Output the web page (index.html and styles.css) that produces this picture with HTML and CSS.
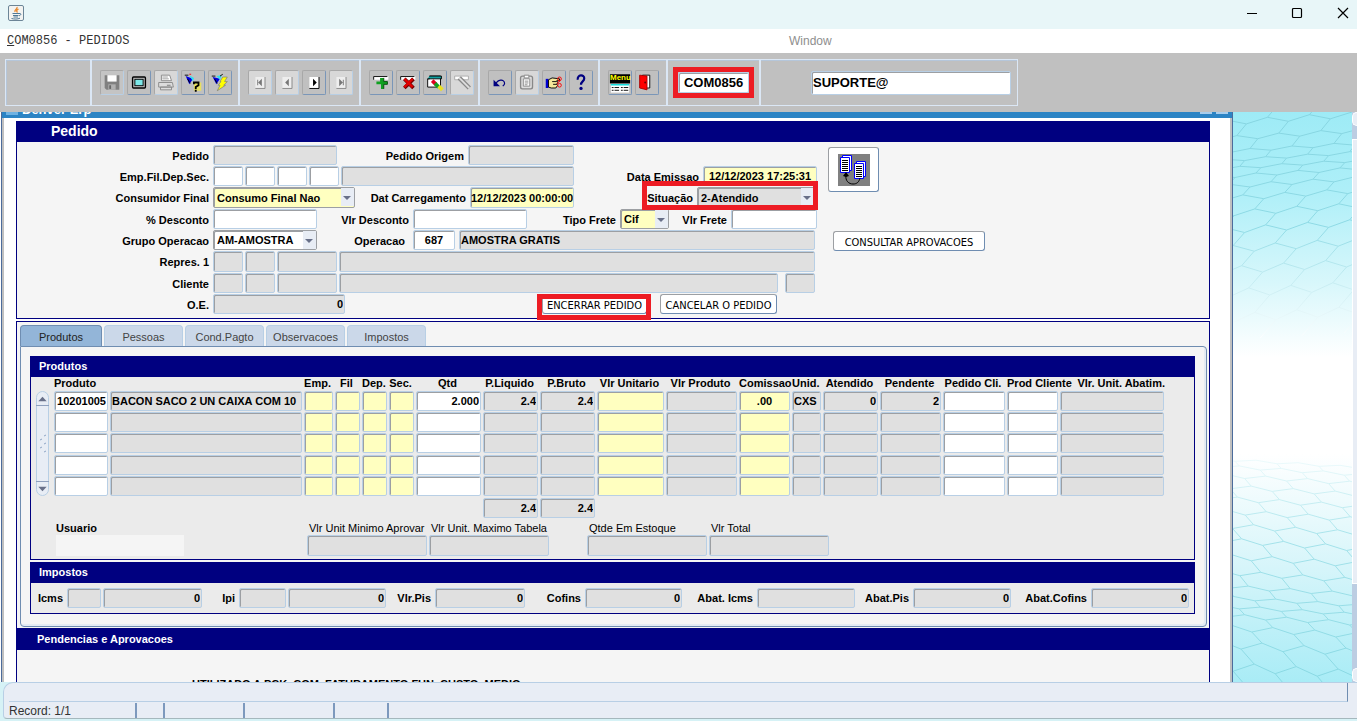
FILE: index.html
```html
<!DOCTYPE html>
<html lang="pt-BR">
<head>
  <meta charset="UTF-8">
  <meta name="viewport" content="width=device-width, initial-scale=1.0">
  <title>COM0856 - PEDIDOS</title>
  <link rel="stylesheet" href="styles.css">
</head>
<body>
  <header class="titlebar">
    <svg class="java" viewBox="0 0 16 16" width="16" height="16">
      <rect x=".5" y=".5" width="15" height="15" rx="1.5" fill="#f3f3f1" stroke="#6c8597"/>
      <path d="M9 2c1 2-3 2.500-2 5M10.500 4c-2 1-2.500 2-1 3.500" fill="none" stroke="#e8872c" stroke-width="1.300"/>
      <path d="M4.500 8.500h6.500M5 10.500h5.500M5.500 12h4.500M3.500 13.500c3 .8 6 .8 8.500-.3M11 8.500c2.500-.4 2.500 1.600 0 2.300" fill="none" stroke="#4f7896"/>
    </svg>
    <div class="win_btns">
      <button aria-label="Minimizar"><svg viewBox="0 0 12 12"><path d="M2 6.500h10" stroke="#000"/></svg></button>
      <button aria-label="Maximizar"><svg viewBox="0 0 12 12"><rect x="1.500" y="1.500" width="9" height="9" rx="1" fill="none" stroke="#000" stroke-width="1.200"/></svg></button>
      <button aria-label="Fechar"><svg viewBox="0 0 12 12"><path d="M1 1l10 10M11 1L1 11" stroke="#000" stroke-width="1.200"/></svg></button>
    </div>
  </header>

  <nav class="menubar">
    <span class="menu_title"><u>C</u>OM0856 - PEDIDOS</span>
    <span class="menu_window">Window</span>
  </nav>

  <div class="toolbar">
    <div class="tools">
      <div class="cell c_blank"></div>
      <div class="cell c_file">
        <button class="tool off" aria-label="Salvar"><svg viewBox="0 0 24 24"><path d="M4 4h16v16h-14l-2-2z" fill="#808080"/><path d="M7 4h10v7H7z" fill="#fff"/><path d="M8 14h8v6H8z" fill="#b0b0b0"/><path d="M9 15h2v4H9z" fill="#666"/></svg></button>
        <button class="tool" aria-label="Tela"><svg viewBox="0 0 24 24"><rect x="5" y="6" width="14" height="12" rx="1" fill="#c0c0c0" stroke="#000" stroke-width="1.500"/><rect x="7.500" y="8.500" width="9" height="7" fill="#7de8e8" stroke="#000"/></svg></button>
        <button class="tool off" aria-label="Imprimir"><svg viewBox="0 0 24 24"><path d="M7 4h9l2 6H7z" fill="#fff" stroke="#888"/><path d="M8 6h6M8 8h7" stroke="#999"/><path d="M4 12h15l1 5H4zM6 17h12v3H6z" fill="#ddd" stroke="#888"/><path d="M13 15h4" stroke="#777"/></svg></button>
        <button class="tool" aria-label="Consultar"><svg viewBox="0 0 24 24"><path d="M4 5l8 3-4 6z" fill="#0000e0"/><path d="M8 4l5 3-1 4z" fill="#30e0f0"/><path d="M3 4h4M6 8l3 5" stroke="#000"/><path d="M8 3h2" stroke="red"/><path d="M13 12h8v9h-8z" fill="#e8e060"/><path d="M13 14v-2h5v3l-3 2v2M15 20v2" fill="none" stroke="#000" stroke-width="2"/></svg></button>
        <button class="tool" aria-label="Executar consulta"><svg viewBox="0 0 24 24"><path d="M4 6l8 2-4 6z" fill="#0000e0"/><path d="M8 5l6-1-2 5z" fill="#30e0f0"/><path d="M3 5h4M6 8l3 5M12 5l3-2" stroke="#000"/><path d="M15 6h5l-3 5h3l-4 4h2l-9 6 3-6h-2l3-4h-1z" fill="#ff0" stroke="#777" stroke-width=".700"/></svg></button>
      </div>
      <div class="cell c_nav">
        <button class="tool off" aria-label="Primeiro"><svg viewBox="0 0 24 24"><path d="M7 6h10v12H7z" fill="#eee"/><path d="M7 18.500h10.500V6" fill="none" stroke="#888"/><path d="M9 9h1v6H9zM14 8v8l-4-4z" fill="#777"/></svg></button>
        <button class="tool off" aria-label="Anterior"><svg viewBox="0 0 24 24"><path d="M7 6h10v12H7z" fill="#eee"/><path d="M7 18.500h10.500V6" fill="none" stroke="#888"/><path d="M14 8v8l-4-4z" fill="#777"/></svg></button>
        <button class="tool" aria-label="Proximo"><svg viewBox="0 0 24 24"><path d="M7 6h10v12H7z" fill="#fff"/><path d="M7 18.500h10.500V6" fill="none" stroke="#000"/><path d="M11 8v8l4-4z" fill="#000"/></svg></button>
        <button class="tool off" aria-label="Ultimo"><svg viewBox="0 0 24 24"><path d="M7 6h10v12H7z" fill="#eee"/><path d="M7 18.500h10.500V6" fill="none" stroke="#888"/><path d="M10 8v8l4-4zM14 9h1v6h-1z" fill="#777"/></svg></button>
      </div>
      <div class="cell c_edit">
        <button class="tool" aria-label="Inserir"><svg viewBox="0 0 24 24"><path d="M4 5h16v4H4z" fill="#fff"/><path d="M4 9V5.500h15" fill="none" stroke="#000"/><path d="M11 7h4v4h4v3h-4v5h-3v-5H7v-3h4z" fill="#10a020"/><path d="M15 7v4h4v3h-4v5" fill="none" stroke="#044b0a"/></svg></button>
        <button class="tool" aria-label="Excluir"><svg viewBox="0 0 24 24"><path d="M4 5h16v4H4z" fill="#fff"/><path d="M4 9V5.500h15" fill="none" stroke="#000"/><path d="M8 8l10 10M18 8L8 18" stroke="#700" stroke-width="4"/><path d="M8 8l9 9M17 8l-9 9" stroke="#e00000" stroke-width="2.500"/></svg></button>
        <button class="tool" aria-label="Limpar"><svg viewBox="0 0 24 24"><path d="M6 5h12v12H4V8h2z" fill="#fff" stroke="#000"/><path d="M6 5h13v3H4" fill="#10a0a0" stroke="#000"/><path d="M9 10l4 4" stroke="#e00020" stroke-width="4"/><path d="M12 13l4 4" stroke="#10a020" stroke-width="4"/><path d="M16 16l4 4" stroke="#e8e020" stroke-width="4"/></svg></button>
        <button class="tool off" aria-label="Apagar"><svg viewBox="0 0 24 24"><path d="M4 5h15v4H4z" fill="#fff" stroke="#aaa"/><path d="M9 7l11 11" stroke="#888" stroke-width="5"/><path d="M9 7l11 11" stroke="#ddd" stroke-width="2"/></svg></button>
      </div>
      <div class="cell c_misc">
        <button class="tool" aria-label="Desfazer"><svg viewBox="0 0 24 24"><path d="M7 15c2-7 10-7 10-2 0 1-1 2-2 3" fill="none" stroke="#000080" stroke-width="1.300"/><path d="M5 9v7h7z" fill="#000080"/></svg></button>
        <button class="tool off" aria-label="Colar"><svg viewBox="0 0 24 24"><rect x="5" y="5" width="13" height="14" rx="2" fill="#ddd" stroke="#888" stroke-width="1.500"/><path d="M8 8h7v8H8zM9 4h5v3H9z" fill="#fff" stroke="#888"/><path d="M9.500 10.500h4M9.500 12.500h4M9.500 14.500h3" stroke="#888"/></svg></button>
        <button class="tool" aria-label="Selecionar"><svg viewBox="0 0 24 24"><path d="M3 8h3v10H3z" fill="#0000d0"/><path d="M6 9l4-2 8 1v2h-3l1 2-1 2 1 1-2 3H9l-3-1z" fill="#f4e89a" stroke="#000"/><path d="M10 11h5M11 14h4" stroke="#000"/><circle cx="18" cy="8" r="2" fill="none" stroke="red"/><circle cx="18" cy="15" r="2" fill="none" stroke="red"/><path d="M15 13l4-3" stroke="red"/></svg></button>
        <button class="tool" aria-label="Ajuda"><svg viewBox="0 0 24 24"><path d="M8.500 9c-1-6 7.500-6 7-1.500 0 3.500-3.500 3-3.500 7" fill="none" stroke="#000080" stroke-width="2.400"/><circle cx="12" cy="18.500" r="1.800" fill="#000080"/></svg></button>
      </div>
      <div class="cell c_exit">
        <button class="tool menu_btn" aria-label="Menu"><svg viewBox="0 0 24 24"><path d="M1 3h22v10H1z" fill="#000"/><path d="M2 14h20v9H2z" fill="#fff"/><path d="M2 14.500h20" stroke="#0dd" stroke-width="1.500"/><path d="M3 17.500h8M13 17.500h8M3 20.500h8M13 20.500h8" stroke="#000" stroke-dasharray="2 1 5 3"/></svg><b>Menu</b></button>
        <button class="tool" aria-label="Sair"><svg viewBox="0 0 24 24"><path d="M7 4h8v14H7z" fill="#fff" stroke="#000"/><path d="M4 4l8 1v15l-8-2z" fill="#f00" stroke="#a00"/><circle cx="10" cy="12" r="1" fill="#600"/></svg></button>
      </div>
      <div class="cell c_code"><span class="mark"><input class="field code" aria-label="Programa" value="COM0856"></span></div>
      <div class="cell c_user"><input class="field user" aria-label="Usuario" value="SUPORTE@"></div>
    </div>
  </div>

  <div class="desktop">
    <main class="window">
      <div class="win_title"><i class="win_icon"></i><span>Denver Erp</span><i class="win_min"></i><i class="win_max"></i></div>
      <div class="win_body">

        <section class="panel pedido">
          <h1 class="bar bar_big">Pedido</h1>
          <div class="pedido_body">
            <div class="form">
              <div class="row r_pedido">
                <label for="pedido">Pedido</label><input class="field gray" id="pedido">
                <label for="origem">Pedido Origem</label><input class="field gray" id="origem">
              </div>
              <div class="row r_emp">
                <label for="emp">Emp.Fil.Dep.Sec.</label>
                <div class="group"><input class="field w30" id="emp"><input class="field w30" aria-label="Fil"><input class="field w30" aria-label="Dep"><input class="field w30" aria-label="Sec"><input class="field gray grow" aria-label="Nome"></div>
                <label for="emissao">Data Emissao</label><input class="field yellow center" id="emissao" value="12/12/2023 17:25:31">
              </div>
              <div class="row r_final">
                <label for="final">Consumidor Final</label><span class="select"><select class="field yellow" id="final"><option>Consumo Final Nao</option></select></span>
                <label for="carreg">Dat Carregamento</label><input class="field yellow tight" id="carreg" value="12/12/2023 00:00:00">
                <div class="mark mark_sit"><label for="situacao">Situação</label><span class="select"><select class="field gray" id="situacao"><option>2-Atendido</option></select></span></div>
              </div>
              <div class="row r_desc">
                <label for="pdesc">% Desconto</label><input class="field" id="pdesc">
                <label for="vdesc">Vlr Desconto</label><input class="field" id="vdesc">
                <label for="tfrete">Tipo Frete</label><span class="select"><select class="field yellow" id="tfrete"><option>Cif</option></select></span>
                <label for="vfrete">Vlr Frete</label><input class="field" id="vfrete">
              </div>
              <div class="row r_oper">
                <label for="grupo">Grupo Operacao</label><span class="select"><select class="field" id="grupo"><option>AM-AMOSTRA</option></select></span>
                <label class="l_oper" for="oper">Operacao</label><input class="field center" id="oper" value="687">
                <input class="field gray" aria-label="Descricao da operacao" value="AMOSTRA GRATIS">
              </div>
              <div class="row r_wide">
                <label for="repres">Repres. 1</label>
                <div class="group"><input class="field gray w30" id="repres"><input class="field gray w30" aria-label="Repres. 2"><input class="field gray w60" aria-label="Repres. 3"><input class="field gray grow" aria-label="Nome repres."></div>
              </div>
              <div class="row r_wide">
                <label for="cliente">Cliente</label>
                <div class="group"><input class="field gray w30" id="cliente"><input class="field gray w30" aria-label="Cliente 2"><input class="field gray w60" aria-label="Cliente 3"><input class="field gray grow" aria-label="Nome cliente"><input class="field gray w30 uf" aria-label="UF"></div>
              </div>
              <div class="row r_oe">
                <label for="oe">O.E.</label><input class="field gray right" id="oe" value="0">
                <div class="buttons"><span class="mark mark_btn"><button class="btn">ENCERRAR PEDIDO</button></span><button class="btn cancel">CANCELAR O PEDIDO</button></div>
              </div>
            </div>
            <div class="actions">
              <button class="btn docs" aria-label="Copiar pedido">
                <svg viewBox="0 0 32 32" width="32" height="32">
                  <rect width="32" height="32" fill="#808080"/>
                  <g fill="#fff" stroke="#00f"><path d="M4.500 1.500h9v15h-9z"/><path d="M2.500 3.500h9v15h-9z"/><path d="M18.500 7.500h9v15h-9z"/><path d="M16.500 9.500h9v15h-9z"/></g>
                  <path d="M4 6.500h6M4 8.500h6M4 10.500h6M4 12.500h6M4 14.500h6M4 16.500h6M18 12.500h6M18 14.500h6M18 16.500h6M18 18.500h6M18 20.500h6M18 22.500h6" stroke="#000"/>
                  <path d="M8 21c-1 6 3 9 7 9s6-2 7-6" fill="none" stroke="#000"/><path d="M8 18l3 4-3 1-3-1z"/>
                </svg>
              </button>
              <button class="btn">CONSULTAR APROVACOES</button>
            </div>
          </div>
        </section>

        <section class="panel tabs_panel">
          <div class="tabs" role="tablist">
            <button class="tab on" role="tab">Produtos</button>
            <button class="tab" role="tab">Pessoas</button>
            <button class="tab" role="tab">Cond.Pagto</button>
            <button class="tab" role="tab">Observacoes</button>
            <button class="tab" role="tab">Impostos</button>
          </div>
          <div class="tab_body">
            <section class="panel box">
              <h2 class="bar">Produtos</h2>
              <div class="items">
                <div class="scroller">
                  <svg viewBox="0 0 13 14" width="13" height="14"><path d="M2 10h9L6.500 5z" fill="#687089"/></svg>
                  <svg viewBox="0 0 13 20" width="13" height="20"><path d="M8 2l2-1M4 6l2-1M8 10l2-1M4 14l2-1M8 18l2-1" stroke="#8fa6c6"/></svg>
                  <svg viewBox="0 0 13 14" width="13" height="14"><path d="M2 5h9L6.500 10z" fill="#687089"/></svg>
                </div>
                <table class="grid">
                  <colgroup><col class="k56"><col class="k194"><col class="k31"><col class="k27"><col class="k27"><col class="k27"><col class="k67"><col class="k57"><col class="k57"><col class="k69"><col class="k73"><col class="k53"><col class="k31"><col class="k57"><col class="k63"><col class="k64"><col class="k53"><col class="k106"></colgroup>
                  <thead>
                    <tr><th class="left" colspan="2">Produto</th><th>Emp.</th><th>Fil</th><th>Dep.</th><th>Sec.</th><th>Qtd</th><th>P.Liquido</th><th>P.Bruto</th><th>Vlr Unitario</th><th>Vlr Produto</th><th>Comissao</th><th>Unid.</th><th>Atendido</th><th>Pendente</th><th>Pedido Cli.</th><th class="left">Prod Cliente</th><th class="right">Vlr. Unit. Abatim.</th></tr>
                  </thead>
                  <tbody id="linhas"></tbody>
                  <tfoot>
                    <tr><td colspan="7"></td><td><input class="field gray right" aria-label="Total P.Liquido" value="2.4"></td><td><input class="field gray right" aria-label="Total P.Bruto" value="2.4"></td><td colspan="9"></td></tr>
                  </tfoot>
                </table>
              </div>
              <div class="totals">
                <div class="total usuario"><label for="usuario">Usuario</label><input id="usuario"></div>
                <div class="total"><label for="minimo">Vlr Unit Minimo Aprovar</label><input class="field gray" id="minimo"></div>
                <div class="total"><label for="maximo">Vlr Unit. Maximo Tabela</label><input class="field gray" id="maximo"></div>
                <div class="total estoque"><label for="estoque">Qtde Em Estoque</label><input class="field gray" id="estoque"></div>
                <div class="total"><label for="vtotal">Vlr Total</label><input class="field gray" id="vtotal"></div>
              </div>
            </section>

            <section class="panel box">
              <h2 class="bar">Impostos</h2>
              <div class="taxes">
                <label for="icms">Icms</label><div class="group"><input class="field gray w34" id="icms"><input class="field gray right grow" aria-label="Valor Icms" value="0"></div>
                <label for="ipi">Ipi</label><div class="group"><input class="field gray w47" id="ipi"><input class="field gray right grow" aria-label="Valor Ipi" value="0"></div>
                <label for="pis">Vlr.Pis</label><input class="field gray right" id="pis" value="0">
                <label for="cofins">Cofins</label><input class="field gray right" id="cofins" value="0">
                <label for="aicms">Abat. Icms</label><input class="field gray right" id="aicms">
                <label for="apis">Abat.Pis</label><input class="field gray right" id="apis" value="0">
                <label for="acofins">Abat.Cofins</label><input class="field gray right" id="acofins" value="0">
              </div>
            </section>
          </div>
          <h2 class="bar bar_pend">Pendencias e Aprovacoes</h2>
          <p class="pend_text">UTILIZADO A PCK_COM_FATURAMENTO.FUN_CUSTO_MEDIO</p>
        </section>
      </div>
    </main>

    <svg class="wallpaper" viewBox="0 0 119 570" preserveAspectRatio="xMinYMin slice">
      <defs>
        <linearGradient id="sky" x1="0" y1="0" x2="0" y2="1">
          <stop offset="0" stop-color="#9eebf6"/><stop offset=".14" stop-color="#aeeff8"/><stop offset=".3" stop-color="#d8f7fb"/><stop offset=".43" stop-color="#fff"/>
          <stop offset=".6" stop-color="#fff"/><stop offset=".8" stop-color="#d6f5fa"/><stop offset="1" stop-color="#a9ecf6"/>
        </linearGradient>
        <linearGradient id="line" gradientUnits="userSpaceOnUse" x1="0" y1="0" x2="0" y2="570">
          <stop offset="0" stop-color="#86d5e1"/><stop offset=".2" stop-color="#8edae5"/><stop offset=".4" stop-color="#fff"/>
          <stop offset=".6" stop-color="#f2fcfd"/><stop offset=".75" stop-color="#a4e2ea"/><stop offset="1" stop-color="#88d8e3"/>
        </linearGradient>
      </defs>
      <rect width="119" height="570" fill="url(#sky)"/>
      <path id="hex_cima" fill="none" stroke="url(#line)"/>
      <path id="hex_baixo" fill="none" stroke="url(#line)"/>
    </svg>
    <div class="side_scroll"><i></i><b></b><i></i></div>
  </div>

  <footer class="status">
    <div class="status_top"></div>
    <div class="status_line"><span class="s136">Record: 1/1</span><span class="s28"></span><span class="s80"></span><span class="s90"></span><span class="s54"></span></div>
  </footer>

  <script src="script.js"></script>
</body>
</html>
```

FILE: styles.css
```css
* {margin: 0;padding: 0;box-sizing: border-box;}
body {display: flex;flex-direction: column;height: 100vh;overflow: hidden;background-color: #d6f2f6;font: bold 11px/14px "Liberation Sans", Arial, sans-serif;color: #000;}
input, select, button {font: inherit;color: inherit;min-width: 0;border-radius: 0;}
label {white-space: nowrap;}

/* title + menu */
.titlebar {display: flex;justify-content: space-between;align-items: flex-start;height: 29px;padding: 5px 8px 0;background-color: #e8f6f8;flex: none;}
.win_btns {display: flex;gap: 34px;padding-top: 2px;}
.win_btns button {width: 12px;height: 12px;border: 0;background: none;}
.win_btns svg {display: block;}
.menubar {display: flex;align-items: center;height: 24px;padding-left: 7px;background-color: #fff;flex: none;}
.menu_title {flex: 0 0 782px;font: 12px/16px "Liberation Mono", "Courier New", monospace;color: #333;}
.menu_window {font-size: 12px;font-weight: normal;color: #8e8e8e;}

/* toolbar */
.toolbar {padding: 6px 5px;background-color: #c0c0c0;flex: none;}
.tools {display: flex;width: fit-content;height: 47px;border: 1px solid #dbe7f5;box-shadow: inset 1px 1px 0 #b5c6da;}
.cell {display: flex;align-items: center;gap: 3px;padding-left: 8px;border-right: 2px solid #dbe7f5;}
.cell:last-child {border-right: 0;}
.c_blank {width: 86px;}
.c_file {width: 148px;}
.c_nav {width: 121px;}
.c_edit {width: 119px;}
.c_misc {width: 120px;}
.c_exit {width: 68px;}
.c_code {width: 93px;padding-left: 10px;}
.c_user {width: 256px;padding-left: 50px;}
.tool {position: relative;width: 24px;height: 25px;border: 1px solid #a8a8a8;border-right-color: #7a96b8;border-bottom-color: #7a96b8;border-radius: 2px;background-color: #c0c0c0;}
.tool svg {display: block;width: 22px;height: 23px;}
.tool.off {background-color: #d8d8d8;border-right-color: #b8cfe5;border-bottom-color: #b8cfe5;}
.c_file .tool.off:first-child {background-color: #c4c4c4;}
.menu_btn b {position: absolute;left: 1px;top: 2px;font-size: 8px;line-height: 10px;color: #ff0;}
.field.code {display: block;width: 71px;height: 21px;font-size: 13px;text-align: center;}
.field.user {width: 200px;height: 24px;font-size: 13px;}

/* fields */
.field {display: block;width: 100%;height: 20px;padding: 0 1px;border: 1px solid #b8cfe5;border-radius: 2px;background-color: #fff;box-shadow: inset 1px 1px 0 #9c9fa3;outline: 0;}
.gray {background-color: #e0e0e0;}
.yellow {background-color: #ffffc0;}
.tight {padding: 0;}
.center {text-align: center;}
.right {text-align: right;}
.left {text-align: left;}
.w30 {flex: 0 0 30px;}
.w34 {flex: 0 0 34px;}
.w47 {flex: 0 0 47px;}
.w60 {flex: 0 0 60px;}
.grow {flex: 1;}
.group {display: flex;gap: 2px;}
.select {position: relative;display: block;}
.select select {appearance: none;padding: 0 16px 0 3px;border-color: #9c9fa3;}
.select::before {content: "";position: absolute;right: 1px;top: 1px;width: 13px;height: 18px;background-color: #e8edf5;}
.select::after {content: "";position: absolute;right: 4px;top: 9px;border: 4px solid transparent;border-top-color: #687089;border-bottom: 0;}
.mark {position: relative;}
.mark::after {content: "";position: absolute;inset: -5px;border: 5px solid #ed1c24;pointer-events: none;}

/* desktop and inner window */
.desktop {display: flex;flex: 1;min-height: 0;background-color: #fff;}
.window {flex: 1;min-width: 0;margin-left: 1px;overflow: hidden;border-left: 1px solid #4c6c9c;border-right: 1px solid #4c6c9c;background-color: #fff;}
.win_title {display: flex;gap: 4px;align-items: flex-end;height: 6px;padding: 0 4px;overflow: hidden;background-color: #2c84c4;font-size: 13px;line-height: 16px;color: #fff;}
.win_title span {flex: 1;}
.win_icon {width: 12px;height: 12px;margin-bottom: 3px;background-color: #6fb2e2;}
.win_min, .win_max {width: 12px;height: 12px;margin-bottom: 4px;background-color: #a8cdec;}
.win_body {padding: 3px 20px 0 12px;border-left: 2px solid #c0c0c0;border-right: 2px solid #c0c0c0;height: 100%;}
.panel {border: 1px solid #000080;background-color: #f5f5f5;}
.bar {height: 20px;padding-left: 8px;background-color: #000080;color: #fff;font-size: 11px;line-height: 18px;}
.bar_big {padding-left: 34px;font-size: 14px;line-height: 18px;}
.pedido_body {display: flex;padding: 3px 0;}
.row {display: grid;column-gap: 4px;height: 21px;}
.row:nth-child(3n) {height: 22px;}
.row:nth-child(3n) .field {height: 21px;}
.row label {line-height: 22px;text-align: right;}
.r_pedido {grid-template-columns: 192px 124px 123px 106px;}
.r_emp {grid-template-columns: 192px 361px 121px 114px;}
.r_final {grid-template-columns: 192px 142px 107px 104px 237px;}
.r_desc {grid-template-columns: 192px 104px 88px 114px 85px 49px 54px 86px;}
.r_oper {grid-template-columns: 192px 104px 88px 42px 356px;}
.l_oper {padding-right: 4px;}
.r_wide {grid-template-columns: 192px 602px;}
.r_oe {grid-template-columns: 192px 132px 1fr;}
.uf {margin-left: 5px;}
.mark_sit {display: grid;grid-template-columns: 115px 118px;column-gap: 4px;z-index: 1;}
.mark_sit::after {inset: -6px -3px -1px 64px;}
.buttons {display: flex;gap: 13px;padding-left: 193px;}
.mark_btn {width: 105px;}
.mark_btn .btn {width: 100%;}
.mark_btn::after {inset: 0 -4px -4px -5px;}
.cancel {width: 117px;}
.btn {height: 20px;padding-top: 3px;border: 1px solid #9c9fa3;border-right-color: #6f8db1;border-bottom-color: #6f8db1;border-radius: 3px;background-color: #fff;font: 11px/15px "DejaVu Sans Condensed", "DejaVu Sans", sans-serif;white-space: nowrap;}
.actions {display: flex;flex-direction: column;align-items: flex-start;gap: 39px;padding: 2px 0 0 11px;}
.docs {width: 51px;height: 45px;padding: 0;}
.docs svg {display: block;margin: 0 auto;}
.docs + .btn {width: 152px;margin-left: 5px;}

/* tabs */
.tabs_panel {margin-top: 2px;height: 500px;}
.tabs {display: flex;gap: 2px;padding: 3px 3px 0;}
.tab {width: 79px;height: 21px;padding-top: 2px;border: 1px solid #b8cfe5;border-bottom: 0;border-radius: 4px 4px 0 0;background-color: #cbd8e9;font-weight: normal;color: #444;}
.tab.on {width: 82px;border-color: #6f8db1;background-color: #93b5d8;color: #222;}
.tab_body {display: flex;flex-direction: column;gap: 2px;margin: 0 2px 1px 3px;padding: 9px 11px 12px 9px;border: 1px solid #6f8db1;border-radius: 0 4px 4px 4px;box-shadow: inset -2px -2px 0 #e4ebf3;}
.box {background-color: #ebebeb;}
.items {display: flex;gap: 5px;padding-left: 5px;}
.scroller {display: flex;flex-direction: column;justify-content: space-between;flex: none;width: 13px;height: 105px;margin-top: 14px;border: 1px solid #b8cfe5;border-radius: 7px;background-color: #e8edf5;}
.scroller svg {margin-left: -1px;}
.scroller svg:first-child {border-bottom: 1px solid #8fa0bd;}
.scroller svg:last-child {border-top: 1px solid #8fa0bd;}
.grid {table-layout: fixed;width: 1112px;border-collapse: collapse;}
.grid th {height: 14px;padding-right: 4px;line-height: 12px;vertical-align: top;white-space: nowrap;}
.grid th.right {padding-right: 1px;}
.grid td {height: 21px;padding-right: 2px;vertical-align: top;}
.grid tr:nth-child(3n) td, .grid tr:nth-child(5) td {height: 22px;}
.k27 {width: 27px;}
.k31 {width: 31px;}
.k53 {width: 53px;}
.k56 {width: 56px;}
.k57 {width: 57px;}
.k63 {width: 63px;}
.k64 {width: 64px;}
.k67 {width: 67px;}
.k69 {width: 69px;}
.k73 {width: 73px;}
.k106 {width: 106px;}
.k194 {width: 194px;}
.totals {display: flex;gap: 2px;padding: 2px 0 3px 25px;}
.total {width: 120px;}
.total label {display: block;padding-left: 2px;font-weight: normal;}
.total .field {height: 21px;}
.total.usuario {width: 249px;}
.usuario label {padding-left: 0;font-weight: bold;}
.usuario input {display: block;width: 128px;height: 21px;border: 0;background-color: #f5f5f5;}
.estoque {margin-left: 36px;}
.taxes {display: grid;grid-template-columns: 32px 135px 29px 147px 41px 90px 52px 97px 67px 98px 50px 98px 72px 98px;column-gap: 4px;padding: 5px 0 4px;}
.taxes label {line-height: 21px;text-align: right;}
.bar_pend {height: 22px;padding-left: 20px;line-height: 22px;}
.pend_text {padding: 27px 0 0 175px;}

/* right side */
.wallpaper {display: block;flex: 0 0 119px;height: 100%;}
.side_scroll {display: flex;flex-direction: column;flex: 0 0 5px;background-color: #bccde2;}
.side_scroll i {flex: 0 0 14px;border: 1px solid #fff;border-right: 0;border-radius: 6px 0 0 6px;background-color: #e8edf5;}
.side_scroll b {flex: 0 0 445px;margin: 13px 0 auto;border: 1px solid #fff;border-right: 0;background-color: #e8edf5;}

/* status */
.status {flex: none;height: 37px;margin: 0 0 2px 3px;padding: 0 5px;border: 1px solid #b8cfe5;border-right: 0;border-bottom-color: #a5b8bd;border-radius: 10px 0 0 4px;background-color: #e8edf5;}
.status_top {height: 19px;margin-right: 4px;border-bottom: 1px solid #b8cfe5;border-right: 1px solid #6f8db1;}
.status_line {display: flex;padding-top: 1px;}
.status_line span {height: 15px;border-right: 2px solid #7d99bd;font-size: 12px;font-weight: normal;line-height: 16px;color: #333;}
.s136 {width: 128px;}
.s28 {width: 28px;}
.s80 {width: 80px;}
.s90 {width: 90px;}
.s54 {width: 54px;}
```

FILE: script.js
```js
// colunas do grid: nome, classe, valor da primeira linha
const colunas = [
  ['Produto', 'right', '10201005'],
  ['Descricao', 'gray', 'BACON SACO 2 UN CAIXA COM 10'],
  ['Emp.', 'yellow', ''],
  ['Fil', 'yellow', ''],
  ['Dep.', 'yellow', ''],
  ['Sec.', 'yellow', ''],
  ['Qtd', 'right', '2.000'],
  ['P.Liquido', 'gray right', '2.4'],
  ['P.Bruto', 'gray right', '2.4'],
  ['Vlr Unitario', 'yellow', ''],
  ['Vlr Produto', 'gray', ''],
  ['Comissao', 'yellow center', '.00'],
  ['Unid.', 'gray', 'CXS'],
  ['Atendido', 'gray right', '0'],
  ['Pendente', 'gray right', '2'],
  ['Pedido Cli.', '', ''],
  ['Prod Cliente', '', ''],
  ['Vlr. Unit. Abatim.', 'gray', '']
];

let linhas = '';
for(let i=0;i<5;i++){
  linhas += '<tr>';
  colunas.forEach(function(col){
    linhas += `<td><input class="field ${col[1]}" aria-label="${col[0]} ${i+1}" value="${i == 0 ? col[2] : ''}"></td>`;
  });
  linhas += '</tr>';
}
document.querySelector('#linhas').innerHTML = linhas;

// papel de parede: colmeia em perspectiva
// ys: altura de cada linha, skew: inclinacao das ligacoes, queda: inclinacao das linhas
function colmeia(ys, skew, queda){
  const meia = 21;
  let d = '';
  let desloca = -40;
  for(let k=0;k<ys.length-1;k++){
    const h = ys[k+1] - ys[k];
    const prox = k+2 < ys.length ? ys[k+2] - ys[k+1] : h;
    const passo = h * skew;
    for(let j=0;j<12;j++){
      const x = desloca + j*meia;
      const baixo = j % 2 == 0;
      const y = ys[k] + (baixo ? 1 : -1) * h / 6 + x * queda;
      d += (j == 0 ? 'M' : 'L') + x.toFixed(1) + ' ' + y.toFixed(1);
    }
    for(let j=0;j<12;j+=2){
      const x = desloca + j*meia;
      const x2 = x + passo;
      d += `M${x.toFixed(1)} ${(ys[k] + h/6 + x*queda).toFixed(1)}L${x2.toFixed(1)} ${(ys[k+1] - prox/6 + x2*queda).toFixed(1)}`;
    }
    desloca += passo - meia;
    if(desloca < -82) desloca += meia * 2;
  }
  return d;
}
document.querySelector('#hex_cima').setAttribute('d', colmeia([-6,10,26,39,48,56,64,74,86,101,118,137,158,181,206,232], -0.6, -0.06));
document.querySelector('#hex_baixo').setAttribute('d', colmeia([348,355,364,375,387,400,414,429,445,461,475,486,495,504,516,533,555,580], 0.6, 0.06));
```
